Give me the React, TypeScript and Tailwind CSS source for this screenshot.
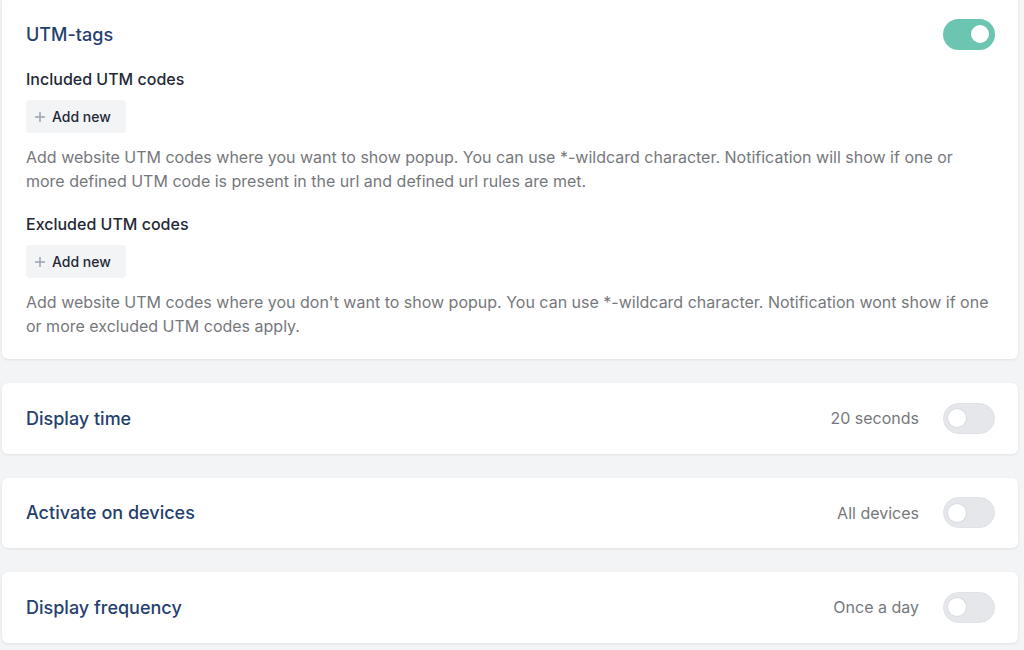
import React from "react";

function Toggle({ on }: { on: boolean }) {
  return (
    <div
      className={
        on
          ? "relative w-[52px] h-[31px] rounded-full bg-[#6cc5b1] shrink-0"
          : "relative w-[52px] h-[31px] rounded-full bg-[#e5e7eb] border border-[#dfe2e6] shrink-0"
      }
    >
      <div
        className={
          on
            ? "absolute right-[6px] top-[6.5px] w-[18px] h-[18px] rounded-full bg-white"
            : "absolute left-[4px] top-[5.5px] w-[18px] h-[18px] rounded-full bg-white shadow-[0_0_0_1px_#d9dce1]"
        }
      />
    </div>
  );
}

function AddButton() {
  return (
    <button className="flex items-center gap-[6px] h-[33px] w-[100px] pl-[8px] rounded-[4px] bg-[#f3f4f6] text-[14px] font-medium text-[#1f2937]">
      <svg width="12" height="12" viewBox="0 0 12 12" className="text-[#9ca3af]">
        <path d="M6 1v10M1 6h10" stroke="currentColor" strokeWidth="1.5" />
      </svg>
      <span>Add new</span>
    </button>
  );
}

function RowCard({ title, value }: { title: string; value: string }) {
  return (
    <div className="bg-white rounded-[6px] shadow-[0_1px_3px_rgba(0,0,0,0.08)] h-[70.5px] pl-[24px] pr-[23px] flex items-center justify-between">
      <div className="text-[18px] font-medium text-[#26406e]">{title}</div>
      <div className="flex items-center gap-[24px]">
        <span className="text-[16px] text-[#76787c]">{value}</span>
        <Toggle on={false} />
      </div>
    </div>
  );
}

export default function App() {
  return (
    <div
      className="min-h-[650px] bg-[#f3f4f6] pl-[2px] pr-[6px] pb-[8px]"
      style={{ fontFamily: "Inter, 'Noto Sans', sans-serif" }}
    >
      <div className="flex flex-col gap-[24px] -mt-[1px]">
        <div className="bg-white rounded-b-[6px] shadow-[0_1px_3px_rgba(0,0,0,0.08)] pl-[24px] pr-[23px] pt-[18px] pb-[21px]">
          <div className="flex items-center justify-between h-[34px]">
            <div className="text-[18px] font-medium text-[#26406e]">UTM-tags</div>
            <Toggle on={true} />
          </div>
          <div className="mt-[16px] text-[16px] font-medium text-[#1f2937] leading-[24px]">Included UTM codes</div>
          <div className="mt-[9px]">
            <AddButton />
          </div>
          <p className="mt-[12px] text-[16px] leading-[24px] text-[#76787c]">
            Add website UTM codes where you want to show popup. You can use *-wildcard character. Notification will show if one or more defined UTM code is present in the url and defined url rules are met.
          </p>
          <div className="mt-[19px] text-[16px] font-medium text-[#1f2937] leading-[24px]">Excluded UTM codes</div>
          <div className="mt-[9px]">
            <AddButton />
          </div>
          <p className="mt-[12px] text-[16px] leading-[24px] text-[#76787c]">
            Add website UTM codes where you don't want to show popup. You can use *-wildcard character. Notification wont show if one or more excluded UTM codes apply.
          </p>
        </div>
        <RowCard title="Display time" value="20 seconds" />
        <RowCard title="Activate on devices" value="All devices" />
        <RowCard title="Display frequency" value="Once a day" />
      </div>
    </div>
  );
}
